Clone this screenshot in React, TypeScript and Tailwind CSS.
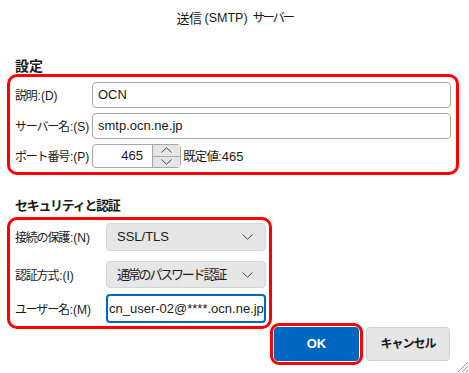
import React from "react";

const font = { fontFamily: '"Liberation Sans", "Noto Sans CJK JP", sans-serif' };

const Chevron = ({ up }: { up?: boolean }) => (
  <svg width="11" height="6" viewBox="0 0 11 6" className="block">
    <path
      d={up ? "M0.5 5.5 L5.5 0.8 L10.5 5.5" : "M0.5 0.5 L5.5 5.2 L10.5 0.5"}
      fill="none"
      stroke="#444"
      strokeWidth="1"
    />
  </svg>
);

// label: japanese part squeezed a bit, latin part normal
const Label = ({ jp, key_, w }: { jp: string; key_: string; w: string }) => (
  <span className={`whitespace-nowrap ${w}`}>
    <span className="text-[12px] tracking-[-1.2px]">{jp}</span>
    <span className="ml-[1px] text-[12px]">{key_}</span>
  </span>
);

const Select = ({ children, className }: { children: React.ReactNode; className: string }) => (
  <div
    className={`flex items-center justify-between whitespace-nowrap rounded-[4px] border border-[#d6d6d6] bg-[#e6e6e6] pl-[10px] pr-[12px] text-[13px] text-[#1a1a1a] ${className}`}
  >
    <span>{children}</span>
    <Chevron />
  </div>
);

export default function App() {
  return (
    <div className="relative h-[373px] w-[469px] overflow-hidden bg-white text-[#1a1a1a]" style={font}>
      {/* title */}
      <div className="flex h-[36px] items-center justify-center whitespace-nowrap pt-[1px] text-[13px]">
        <span className="tracking-[-0.5px]">送信</span>
        <span className="ml-[3px] text-[12.5px]">(SMTP)</span>
        <span className="ml-[5px] text-[12.5px] tracking-[-2.5px]">サーバー</span>
      </div>

      {/* 設定 */}
      <div className="mt-[22px] pl-[15px] text-[14px] font-bold leading-[16px]">設定</div>
      <div className="mx-[7px] flex w-[452px] flex-col gap-[5px] rounded-[10px] border-[3.5px] border-[#ff0000] pb-[4px] pl-[5px] pr-[5px] pt-[5px]">
        <div className="flex items-center">
          <Label jp="説明" key_=":(D)" w="w-[77px]" />
          <div className="flex h-[26px] flex-1 items-center rounded-[4px] border border-[#a8a8a8] px-[5px] text-[13px]">
            OCN
          </div>
        </div>
        <div className="flex items-center">
          <Label jp="サーバー名" key_=":(S)" w="w-[77px]" />
          <div className="flex h-[26px] flex-1 items-center rounded-[4px] border border-[#a8a8a8] px-[5px] text-[13px]">
            smtp.ocn.ne.jp
          </div>
        </div>
        <div className="flex items-center">
          <Label jp="ポート番号" key_=":(P)" w="w-[77px]" />
          <div className="flex h-[24px] w-[89px] rounded-[4px] border border-[#a8a8a8]">
            <div className="flex flex-1 items-center justify-end pr-[9px] text-[13px]">465</div>
            <div className="flex w-[28px] flex-col border-l border-[#a8a8a8] bg-[#e6e6e6]">
              <div className="flex flex-1 items-center justify-center border-b border-[#a8a8a8]">
                <Chevron up />
              </div>
              <div className="flex flex-1 items-center justify-center">
                <Chevron />
              </div>
            </div>
          </div>
          <span className="ml-[2px] whitespace-nowrap">
            <span className="text-[12.5px] tracking-[-0.8px]">既定値</span>
            <span className="text-[13px]">:465</span>
          </span>
        </div>
      </div>

      {/* セキュリティと認証 */}
      <div className="mt-[23px] whitespace-nowrap pl-[15px] text-[13px] font-bold leading-[16px] tracking-[-1.3px]">
        セキュリティと認証
      </div>
      <div className="mx-[7px] mt-[3px] flex w-[265px] flex-col rounded-[10px] border-[3.5px] border-[#ff0000] pb-[3px] pl-[5px] pr-[3px] pt-[3px]">
        <div className="flex items-center">
          <Label jp="接続の保護" key_=":(N)" w="w-[91px]" />
          <Select className="h-[28px] w-[160px]">SSL/TLS</Select>
        </div>
        <div className="mt-[10px] flex items-center">
          <Label jp="認証方式" key_=":(I)" w="w-[91px]" />
          <Select className="h-[27px] w-[160px]">
            <span className="text-[13px] tracking-[-2.2px]">通常のパスワード認証</span>
          </Select>
        </div>
        <div className="mt-[6px] flex items-center">
          <Label jp="ユーザー名" key_=":(M)" w="w-[91px]" />
          <div className="flex h-[29px] w-[160px] items-center overflow-hidden whitespace-nowrap rounded-[4px] border-[2px] border-[#0067c0] pl-[1px] text-[13px]">
            cn_user-02@****.ocn.ne.jp
            <span className="inline-block h-[17px] w-[1px] bg-black" />
          </div>
        </div>
      </div>

      {/* buttons */}
      <div className="-mt-[6px] flex items-start pl-[270px]">
        <div className="rounded-[9px] border-[3.5px] border-[#ff0000] p-[1px]">
          <div className="flex h-[34px] w-[85px] items-center justify-center rounded-[4px] bg-[#0067c0] text-[13px] font-bold text-white">
            OK
          </div>
        </div>
        <div className="ml-[3px] mt-[4px] flex h-[34px] w-[84px] items-center justify-center whitespace-nowrap rounded-[4px] border border-[#d0d0d0] bg-[#e6e6e6] text-[12px] font-bold tracking-[-1px]">
          キャンセル
        </div>
      </div>

      {/* resize grip */}
      <svg width="14" height="14" viewBox="0 0 14 14" className="absolute bottom-0 right-0">
        <path d="M13 3 L3 13 M13 7 L7 13 M13 11 L11 13" stroke="#999" strokeWidth="1" />
      </svg>
    </div>
  );
}
